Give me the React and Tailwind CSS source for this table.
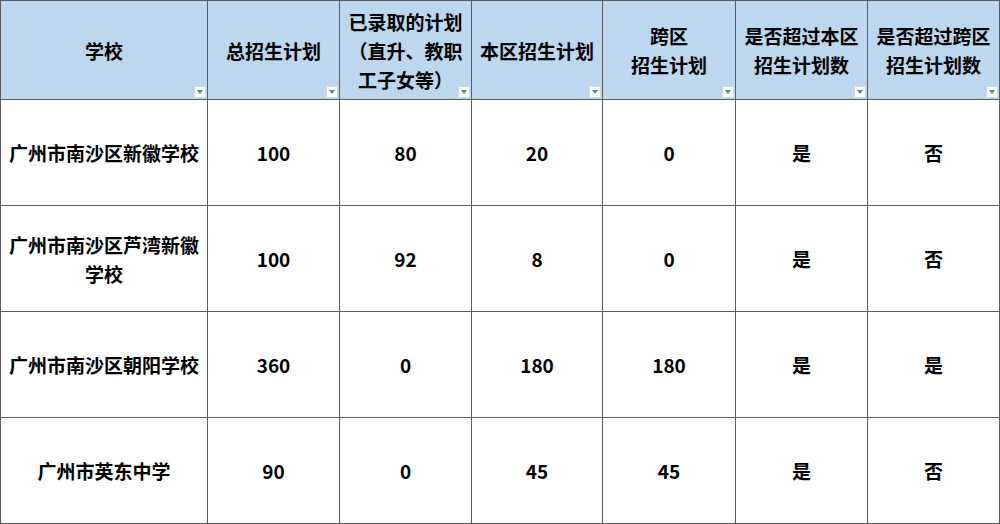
import React from "react";

const headers = [
  ["学校"],
  ["总招生计划"],
  ["已录取的计划", "（直升、教职", "工子女等）"],
  ["本区招生计划"],
  ["跨区", "招生计划"],
  ["是否超过本区", "招生计划数"],
  ["是否超过跨区", "招生计划数"],
];

const rows = [
  [["广州市南沙区新徽学校"], "100", "80", "20", "0", "是", "否"],
  [["广州市南沙区芦湾新徽", "学校"], "100", "92", "8", "0", "是", "否"],
  [["广州市南沙区朝阳学校"], "360", "0", "180", "180", "是", "是"],
  [["广州市英东中学"], "90", "0", "45", "45", "是", "否"],
];

function FilterButton() {
  return (
    <div className="absolute right-[1px] bottom-[1px] w-[12px] h-[12px] bg-white border border-[#d9d9d9] flex items-center justify-center">
      <svg width="6" height="4" viewBox="0 0 6 4">
        <path d="M0 0 L6 0 L3 4 Z" fill="#2f9e6a" />
      </svg>
    </div>
  );
}

export default function App() {
  return (
    <div
      className="w-[1000px] h-[524px] bg-white text-black font-bold text-[19px] leading-[29px] border-l border-t border-[#5c5c5c] grid grid-cols-[207px_132px_132px_131px_133px_132px_132px] grid-rows-[99px_106px_106px_106px_106px]"
      style={{ fontFamily: '"Noto Sans CJK SC", "Noto Sans", sans-serif' }}
    >
      {headers.map((lines, i) => (
        <div
          key={i}
          className="relative bg-[#bdd7ee] border-r border-b border-[#5c5c5c] flex flex-col items-center justify-center text-center"
        >
          {lines.map((l, j) => (
            <div key={j} className="whitespace-nowrap">{l}</div>
          ))}
          <FilterButton />
        </div>
      ))}
      {rows.map((row, r) =>
        row.map((cell, c) => (
          <div
            key={r + "-" + c}
            className="border-r border-b border-[#5c5c5c] flex flex-col items-center justify-center text-center"
          >
            {Array.isArray(cell)
              ? cell.map((l, j) => (
                  <div key={j} className="whitespace-nowrap">{l}</div>
                ))
              : cell}
          </div>
        ))
      )}
    </div>
  );
}
